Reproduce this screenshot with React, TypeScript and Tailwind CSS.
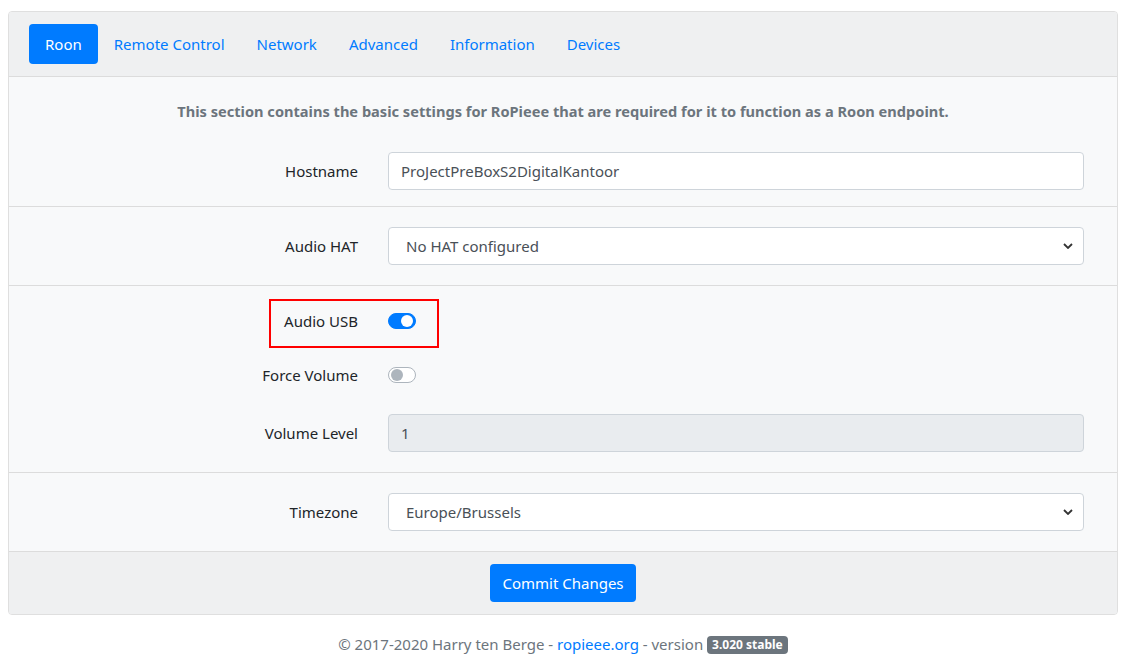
import React from "react";

const font = "font-['Noto_Sans','Open_Sans',sans-serif]";

function Chevron() {
  return (
    <svg width="10" height="6" viewBox="0 0 10 6" className="absolute right-[10px] top-1/2 -translate-y-1/2">
      <path d="M1 1l4 4 4-4" fill="none" stroke="#333" strokeWidth="1.8" />
    </svg>
  );
}

function Label({ children }: { children: React.ReactNode }) {
  return <div className="w-[329px] shrink-0 text-right text-[#212529] leading-[38px]">{children}</div>;
}

function Select({ value }: { value: string }) {
  return (
    <div className="relative flex-1 h-[38px] border border-[#ced4da] rounded bg-white flex items-center pl-[17px] text-[#495057]">
      {value}
      <Chevron />
    </div>
  );
}

function Switch({ on }: { on: boolean }) {
  return on ? (
    <div className="w-[28px] h-[16px] rounded-full bg-[#007bff] border border-[#007bff] relative">
      <div className="absolute right-[2px] top-[1px] w-[12px] h-[12px] rounded-full bg-white" />
    </div>
  ) : (
    <div className="w-[28px] h-[16px] rounded-full bg-white border border-[#adb5bd] relative">
      <div className="absolute left-[2px] top-[1px] w-[12px] h-[12px] rounded-full bg-[#adb5bd]" />
    </div>
  );
}

export default function App() {
  const tabs = ["Remote Control", "Network", "Advanced", "Information", "Devices"];
  return (
    <div className={`${font} relative min-h-[657px] bg-white pt-[11px] pl-2 pr-[5px] text-[15px] leading-6`}>
      <div className="border border-[#dfdfdf] rounded bg-[#f8f9fa] overflow-hidden">
        <div className="bg-[#eff0f1] border-b border-[#dcdcdc] px-5 py-3 flex">
          <div className="bg-[#007bff] text-white rounded px-4 py-2">Roon</div>
          {tabs.map((t) => (
            <div key={t} className="text-[#007bff] px-4 py-2">
              {t}
            </div>
          ))}
        </div>

        <div className="pt-[22px] pb-4">
          <div className="text-center font-bold text-[#6c757d] text-[14.6px]">
            This section contains the basic settings for RoPieee that are required for it to function as a Roon endpoint.
          </div>
          <div className="flex gap-[30px] pl-5 pr-[33px] mt-[29px]">
            <Label>Hostname</Label>
            <div className="flex-1 h-[38px] border border-[#ced4da] rounded bg-white flex items-center pl-[12px] text-[#495057]">
              ProJectPreBoxS2DigitalKantoor
            </div>
          </div>
        </div>

        <div className="border-t border-[#dcdcdc] py-5 flex gap-[30px] pl-5 pr-[33px]">
          <Label>Audio HAT</Label>
          <Select value="No HAT configured" />
        </div>

        <div className="border-t border-[#dcdcdc] pt-4 pb-5 pl-5 pr-[33px]">
          <div className="flex gap-[30px] items-center">
            <Label>Audio USB</Label>
            <Switch on />
          </div>
          <div className="flex gap-[30px] items-center mt-4">
            <Label>Force Volume</Label>
            <Switch on={false} />
          </div>
          <div className="flex gap-[30px] mt-5">
            <Label>Volume Level</Label>
            <div className="flex-1 h-[38px] border border-[#ced4da] rounded bg-[#e9ecef] flex items-center pl-[12px] text-[#495057]">
              1
            </div>
          </div>
        </div>

        <div className="border-t border-[#dcdcdc] py-5 flex gap-[30px] pl-5 pr-[33px]">
          <Label>Timezone</Label>
          <Select value="Europe/Brussels" />
        </div>

        <div className="bg-[#eff0f1] border-t border-[#dcdcdc] py-3 flex justify-center">
          <div className="bg-[#007bff] text-white rounded px-3 h-[38px] flex items-center">Commit Changes</div>
        </div>
      </div>

      <div className="mt-[17px] text-center text-[#6c757d]">
        © 2017-2020 Harry ten Berge - <span className="text-[#007bff]">ropieee.org</span> - version{" "}
        <span className="inline-block bg-[#6c757d] text-white font-bold text-[12px] leading-[12px] px-[5px] py-[3px] rounded align-[1px]">
          3.020 stable
        </span>
      </div>

      <div className="pointer-events-none absolute left-[269px] top-[299px] w-[170px] h-[49px] border-2 border-[#ff0000]" />
    </div>
  );
}
